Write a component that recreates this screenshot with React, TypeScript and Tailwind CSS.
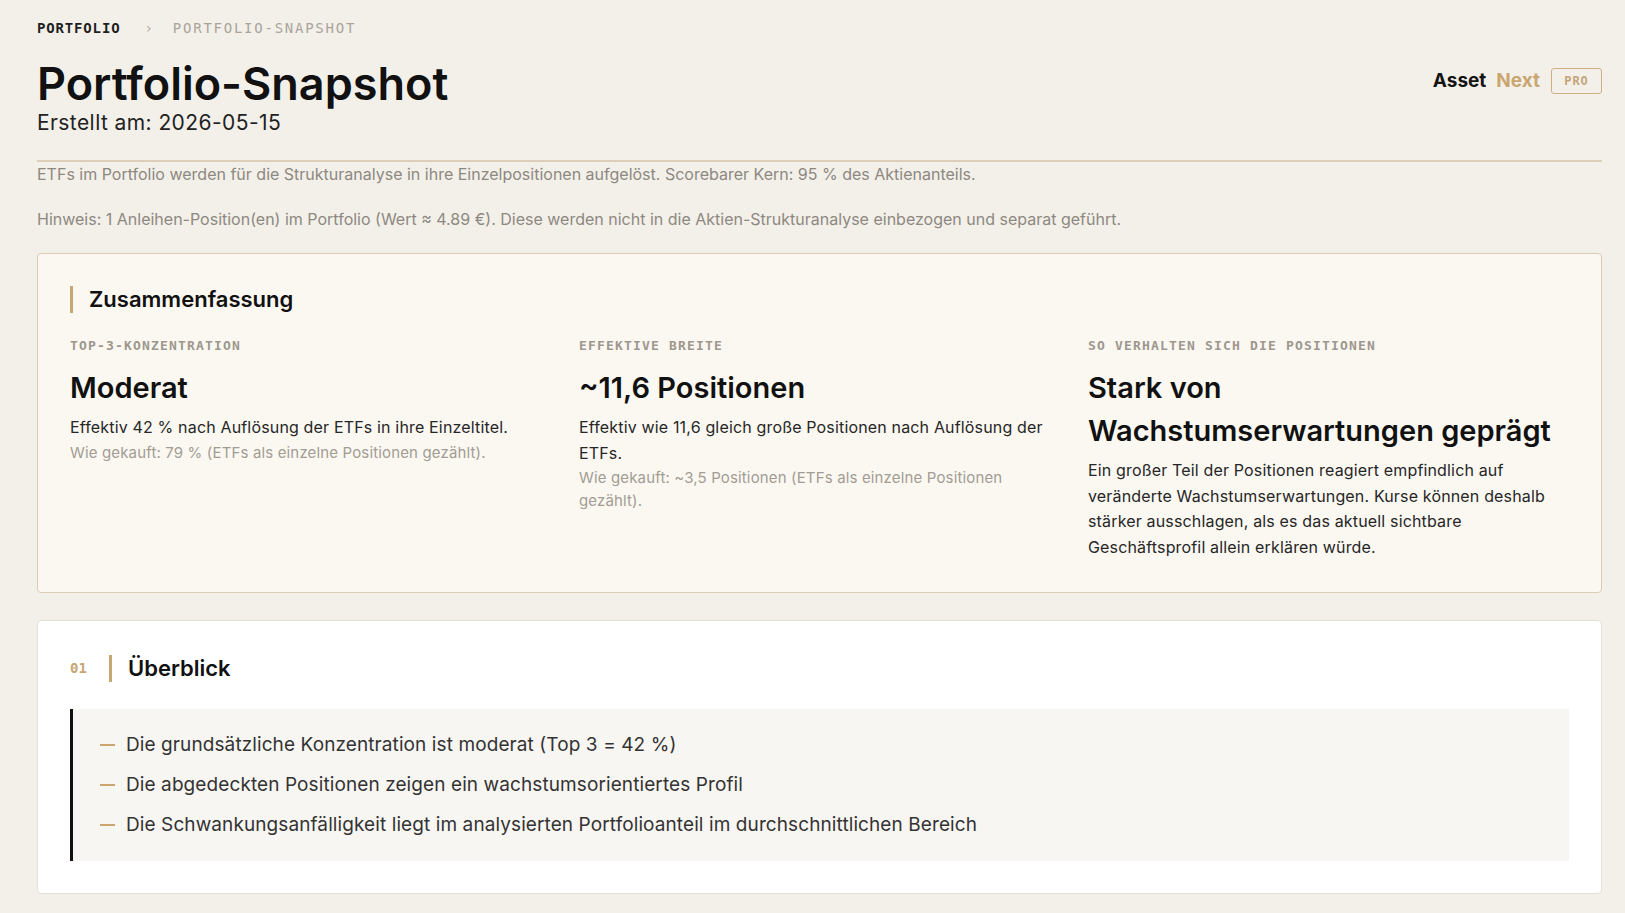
import { ReactNode } from "react";

/**
 * Portfolio-Snapshot — summary page with key metrics and overview bullets
 */

const sans = "font-['Inter','Noto_Sans',sans-serif]";
const mono = "font-['DejaVu_Sans_Mono','Liberation_Mono',monospace]";

type Metric = {
  label: string;
  title: string;
  body: string;
  note?: string;
};

const metrics: Metric[] = [
  {
    label: "Top-3-Konzentration",
    title: "Moderat",
    body: "Effektiv 42 % nach Auflösung der ETFs in ihre Einzeltitel.",
    note: "Wie gekauft: 79 % (ETFs als einzelne Positionen gezählt).",
  },
  {
    label: "Effektive Breite",
    title: "~11,6 Positionen",
    body: "Effektiv wie 11,6 gleich große Positionen nach Auflösung der ETFs.",
    note: "Wie gekauft: ~3,5 Positionen (ETFs als einzelne Positionen gezählt).",
  },
  {
    label: "So verhalten sich die Positionen",
    title: "Stark von Wachstumserwartungen geprägt",
    body: "Ein großer Teil der Positionen reagiert empfindlich auf veränderte Wachstumserwartungen. Kurse können deshalb stärker ausschlagen, als es das aktuell sichtbare Geschäftsprofil allein erklären würde.",
  },
];

const overview = [
  "Die grundsätzliche Konzentration ist moderat (Top 3 = 42 %)",
  "Die abgedeckten Positionen zeigen ein wachstumsorientiertes Profil",
  "Die Schwankungsanfälligkeit liegt im analysierten Portfolioanteil im durchschnittlichen Bereich",
];

function SectionHeading({ children }: { children: ReactNode }) {
  return (
    <h2 className="border-l-[3px] border-[#c6a672] pl-[16px] text-[22px] font-semibold leading-[27px] text-[#111]">
      {children}
    </h2>
  );
}

export default function App() {
  return (
    <div className={`${sans} min-h-screen bg-[#f3f0ea] pl-[37px] pr-[23px] pt-[18px] pb-10 text-[#1c1c1c]`}>
      {/* breadcrumb */}
      <nav className={`${mono} flex items-center text-[14px] leading-5`}>
        <span className="font-bold tracking-[0.06em] text-[#1f1f1f]">PORTFOLIO</span>
        <span className="ml-[24px] mr-[20px] text-[#b0aaa2]">›</span>
        <span className="tracking-[0.125em] text-[#aaa49b]">PORTFOLIO-SNAPSHOT</span>
      </nav>

      <header className="mt-[21px] flex items-start justify-between border-b-2 border-[#dccfba] pb-[23px]">
        <div>
          <h1 className="text-[45px] font-semibold leading-[50px] text-[#111]">Portfolio-Snapshot</h1>
          <p className="text-[21px] leading-7 tracking-[0.02em] text-[#222]">Erstellt am: 2026-05-15</p>
        </div>
        <div className="mt-[8px] flex items-center">
          <span className="text-[19px] font-bold text-[#141414]">Asset</span>
          <span className="ml-[10px] text-[19px] font-bold text-[#c9a670]">Next</span>
          <span
            className={`${mono} ml-[11px] flex h-[26px] w-[51px] items-center justify-center rounded-[3px] border-[1.5px] border-[#cdb084] text-[12px] font-bold tracking-[0.08em] text-[#c4a577]`}
          >
            PRO
          </span>
        </div>
      </header>

      <p className="mt-[2px] text-[16px] leading-5 text-[#8d8880]">
        ETFs im Portfolio werden für die Strukturanalyse in ihre Einzelpositionen aufgelöst. Scorebarer Kern: 95 % des Aktienanteils.
      </p>
      <p className="mt-[25px] text-[16px] leading-5 text-[#8d8880]">
        Hinweis: 1 Anleihen-Position(en) im Portfolio (Wert ≈ 4.89 €). Diese werden nicht in die Aktien-Strukturanalyse einbezogen und separat geführt.
      </p>

      {/* summary */}
      <section className="mt-[24px] rounded-[4px] border border-[#dccdb2] bg-[#fbf8f2] p-8">
        <SectionHeading>Zusammenfassung</SectionHeading>
        <div className="mt-[25px] grid grid-cols-3 gap-7">
          {metrics.map((m) => (
            <div key={m.label}>
              <div className={`${mono} text-[13px] font-bold uppercase leading-4 tracking-[0.09em] text-[#9d978e]`}>
                {m.label}
              </div>
              <div className="mt-[12px] text-[29px] font-semibold leading-[43px] text-[#111]">{m.title}</div>
              <p className="mt-[6px] text-[16px] leading-[25.5px] tracking-[0.01em] text-[#262626]">{m.body}</p>
              {m.note && (
                <p className="text-[15px] leading-[23px] tracking-[0.01em] text-[#a29c93]">{m.note}</p>
              )}
            </div>
          ))}
        </div>
      </section>

      {/* overview */}
      <section className="mt-[27px] rounded-[4px] border border-[#e6e0d5] bg-white px-8 pt-[34px] pb-8">
        <div className="flex items-center">
          <span className={`${mono} w-[39px] text-[14px] font-bold text-[#c6a672]`}>01</span>
          <SectionHeading>Überblick</SectionHeading>
        </div>
        <ul className="mt-[27px] flex flex-col gap-3 border-l-[3px] border-[#111] bg-[#f8f6f2] py-[22px] pl-[27px]">
          {overview.map((item) => (
            <li key={item} className="flex items-center text-[19px] leading-7 tracking-[0.005em] text-[#333]">
              <span className="mr-[11px] h-[1.5px] w-[15px] bg-[#c9a670]" />
              {item}
            </li>
          ))}
        </ul>
      </section>
    </div>
  );
}
